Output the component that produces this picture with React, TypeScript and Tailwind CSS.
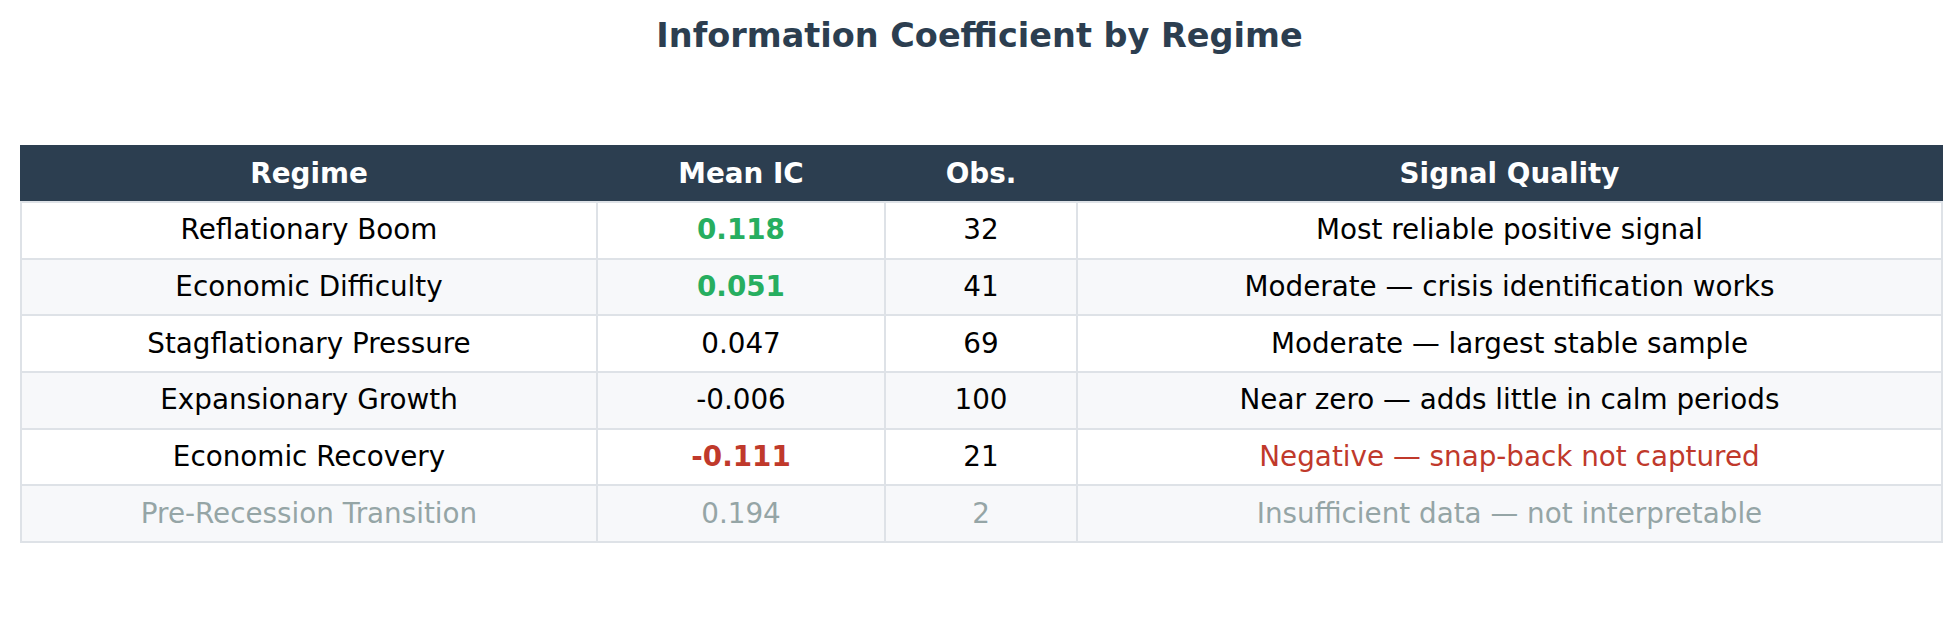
import React from "react";

type Row = {
  regime: string;
  ic: string;
  obs: string;
  quality: string;
  icClass: string;
  textClass: string;
  qualityClass: string;
};

const rows: Row[] = [
  { regime: "Reflationary Boom", ic: "0.118", obs: "32", quality: "Most reliable positive signal", icClass: "text-[#27ae60] font-bold", textClass: "text-black", qualityClass: "text-black" },
  { regime: "Economic Difficulty", ic: "0.051", obs: "41", quality: "Moderate — crisis identification works", icClass: "text-[#27ae60] font-bold", textClass: "text-black", qualityClass: "text-black" },
  { regime: "Stagflationary Pressure", ic: "0.047", obs: "69", quality: "Moderate — largest stable sample", icClass: "text-black", textClass: "text-black", qualityClass: "text-black" },
  { regime: "Expansionary Growth", ic: "-0.006", obs: "100", quality: "Near zero — adds little in calm periods", icClass: "text-black", textClass: "text-black", qualityClass: "text-black" },
  { regime: "Economic Recovery", ic: "-0.111", obs: "21", quality: "Negative — snap-back not captured", icClass: "text-[#c0392b] font-bold", textClass: "text-black", qualityClass: "text-[#c0392b]" },
  { regime: "Pre-Recession Transition", ic: "0.194", obs: "2", quality: "Insufficient data — not interpretable", icClass: "text-[#95a5a6]", textClass: "text-[#95a5a6]", qualityClass: "text-[#95a5a6]" },
];

export default function App() {
  return (
    <div className="w-[1959px] h-[628px] bg-white font-['DejaVu_Sans',sans-serif] flex flex-col">
      <h1 className="pt-[16px] h-[56px] text-center text-[33.5px] leading-[40px] font-bold text-[#2c3e50]">
        Information Coefficient by Regime
      </h1>
      <div className="mt-[89px] pl-[20px]">
        <table className="w-[1921px] table-fixed border-collapse text-[27.8px] leading-[32px]">
          <colgroup>
            <col className="w-[576px]" />
            <col className="w-[288px]" />
            <col className="w-[192px]" />
            <col className="w-[865px]" />
          </colgroup>
          <thead>
            <tr className="h-[56px] bg-[#2c3e50]">
              <th className="border-2 border-[#2c3e50] border-b-[#dee2e7] text-white font-bold text-center">Regime</th>
              <th className="border-2 border-[#2c3e50] border-b-[#dee2e7] text-white font-bold text-center">Mean IC</th>
              <th className="border-2 border-[#2c3e50] border-b-[#dee2e7] text-white font-bold text-center">Obs.</th>
              <th className="border-2 border-[#2c3e50] border-b-[#dee2e7] text-white font-bold text-center">Signal Quality</th>
            </tr>
          </thead>
          <tbody>
            {rows.map((r, i) => (
              <tr key={r.regime} className={`h-[56.7px] ${i % 2 === 1 ? "bg-[#f7f8fa]" : "bg-white"}`}>
                <td className={`border-2 border-[#dee2e7] text-center ${r.textClass}`}>{r.regime}</td>
                <td className={`border-2 border-[#dee2e7] text-center ${r.icClass}`}>{r.ic}</td>
                <td className={`border-2 border-[#dee2e7] text-center ${r.textClass}`}>{r.obs}</td>
                <td className={`border-2 border-[#dee2e7] text-center ${r.qualityClass}`}>{r.quality}</td>
              </tr>
            ))}
          </tbody>
        </table>
      </div>
    </div>
  );
}
